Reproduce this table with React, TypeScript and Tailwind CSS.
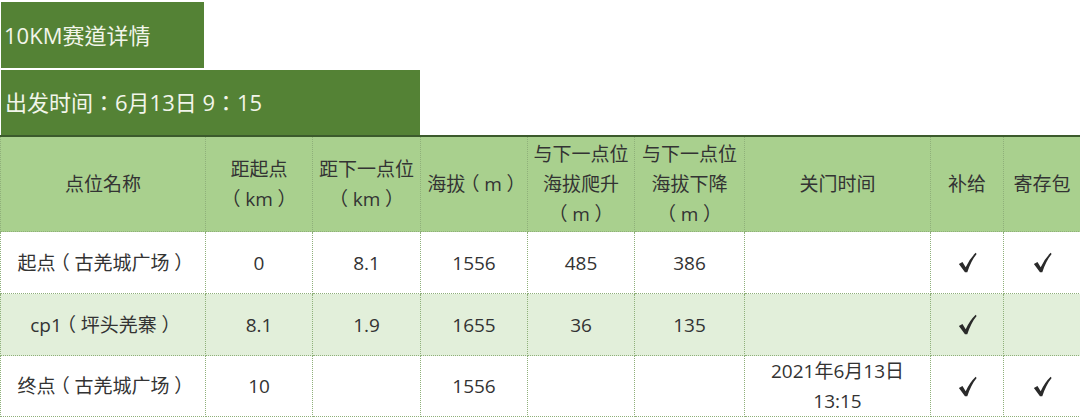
import React from 'react';

const font = { fontFamily: '"Open Sans", "Noto Sans CJK TC", "Noto Sans CJK SC", sans-serif' };

// 全角括号：半宽字形 + 两侧留白，让括号落在字框中间
const t = (s: string) =>
  s.split(/([（）])/).map((p, i) =>
    p === '（' || p === '）'
      ? <span key={i} className="inline-block px-[0.25em] [font-feature-settings:'halt']">{p}</span>
      : p
  );

const Check = () => (
  <svg width="19" height="21" viewBox="0 0 18 20" className="text-[#2a2a2a]">
    <path d="M0.8 11.5 L4.2 9.6 L7.3 14.6 Q11 6.3 16.8 0.8 L17.7 1.9 Q12.6 8 8.8 19.2 L6.6 19.2 Z" fill="currentColor" />
  </svg>
);

const cols = 'grid grid-cols-[205px_107px_108px_107px_107px_110px_186px_73px_77px]';
const cell = 'flex items-center justify-center text-center border-r border-b border-dotted border-[#8fb07a] leading-[30px]';

const headers: React.ReactNode[] = [
  '点位名称',
  <>距起点<br />{t('（km）')}</>,
  <>距下一点位<br />{t('（km）')}</>,
  t('海拔（m）'),
  <>与下一点位<br />海拔爬升<br />{t('（m）')}</>,
  <>与下一点位<br />海拔下降<br />{t('（m）')}</>,
  '关门时间',
  '补给',
  '寄存包',
];

const rows: { cells: React.ReactNode[]; bg: string }[] = [
  { bg: 'bg-white', cells: [t('起点（古羌城广场）'), '0', '8.1', '1556', '485', '386', '', <Check />, <Check />] },
  { bg: 'bg-[#e2efda]', cells: [t('cp1（坪头羌寨）'), '8.1', '1.9', '1655', '36', '135', '', <Check />, ''] },
  { bg: 'bg-white', cells: [t('终点（古羌城广场）'), '10', '', '1556', '', '', <>2021年6月13日<br />13:15</>, <Check />, <Check />] },
];

export default function App() {
  return (
    <div className="w-[1080px] h-[417px] bg-white overflow-hidden" style={font}>
      <div className="pt-[2px] pl-[1px] flex flex-col gap-[2px]">
        <div className="w-[203px] h-[66px] bg-[#548235] text-[#f2f5ea] text-[22px] flex items-center pl-[3px]">
          10KM赛道详情
        </div>
        <div className="w-[419px] h-[65px] bg-[#548235] text-[#f2f5ea] text-[22px] flex items-center pl-[4px]">
          出发时间：6月13日 9：15
        </div>
      </div>
      <div className="border-t-2 border-[#3b5a2c] text-[#333333] text-[19px]">
        <div className={`${cols} h-[95px] bg-[#a9d08e] border-l border-dotted border-[#8fb07a]`}>
          {headers.map((h, i) => (
            <div key={i} className={cell}><div className="whitespace-nowrap">{h}</div></div>
          ))}
        </div>
        {rows.map((r, ri) => (
          <div key={ri} className={`${cols} ${ri === 2 ? 'h-[61px]' : 'h-[62px]'} ${r.bg} border-l border-dotted border-[#8fb07a]`}>
            {r.cells.map((c, ci) => (
              <div key={ci} className={cell}><div className="whitespace-nowrap">{c}</div></div>
            ))}
          </div>
        ))}
      </div>
    </div>
  );
}
